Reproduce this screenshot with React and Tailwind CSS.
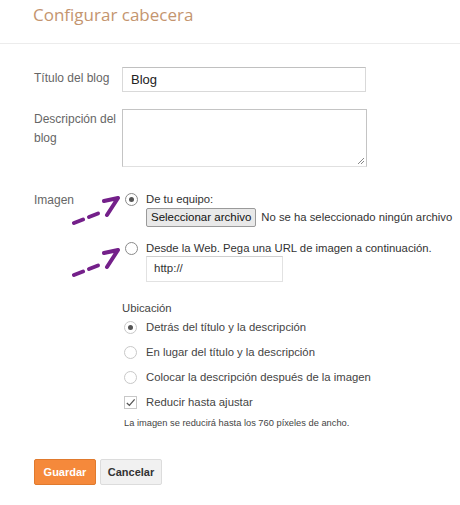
import React from 'react';

// Blogger style "Configurar cabecera" dialog

const sans = { fontFamily: '"Liberation Sans", Arial, sans-serif' };

function Radio({ checked, classic }) {
  return (
    <span
      className={`relative inline-flex h-[13px] w-[13px] shrink-0 items-center justify-center rounded-full border bg-white ${
        classic ? 'border-[#8a8a8a]' : 'border-[#c8c8c8]'
      }`}
    >
      {checked && <span className="h-[5px] w-[5px] rounded-full bg-[#555]" />}
    </span>
  );
}

function Checkbox() {
  return (
    <span className="inline-flex h-[13px] w-[13px] shrink-0 items-center justify-center border border-[#c8c8c8] bg-white">
      <svg viewBox="0 0 12 12" className="h-[11px] w-[11px]">
        <path d="M2 6.5 L4.8 9.2 L10.5 2.5" fill="none" stroke="#555" strokeWidth="1.4" />
      </svg>
    </span>
  );
}

function Arrow({ className }) {
  return (
    <svg viewBox="0 0 50 30" className={className}>
      <g fill="none" stroke="#74208a" strokeWidth="4" strokeLinecap="round" strokeLinejoin="round">
        <path d="M2 27 L11 23.5" />
        <path d="M17 21 L26 17.5" />
        <path d="M32 5 L46 2 L35 19" />
      </g>
    </svg>
  );
}

export default function App() {
  return (
    <div className="min-h-[505px] w-[460px] bg-white text-[11.3px] text-[#555]" style={sans}>
      <div className="h-[44px] border-b border-[#ececec] pl-[33px] pt-[3px]">
        <h1
          className="text-[17px] leading-[24px] text-[#c4956f]"
          style={{ fontFamily: '"Open Sans", sans-serif' }}
        >
          Configurar cabecera
        </h1>
      </div>

      <div className="pl-[34px]">
        {/* Título */}
        <div className="mt-[23px] flex">
          <div className="w-[88px] pt-[2px] text-[12px] leading-[19px] text-[#666]">Título del blog</div>
          <div className="flex h-[25px] w-[244px] items-center border border-[#d9d9d9] border-t-[#c0c0c0] px-[8px] text-[13px] text-[#222]">
            Blog
          </div>
        </div>

        {/* Descripción */}
        <div className="mt-[17px] flex">
          <div className="w-[88px] pt-[1px] text-[12px] leading-[19px] text-[#666]">
            Descripción del
            <br />
            blog
          </div>
          <div className="relative h-[58px] w-[245px] border border-[#c4c4c4] border-b-[#e0e0e0]">
            <svg viewBox="0 0 8 8" className="absolute bottom-[1px] right-[1px] h-[8px] w-[8px]">
              <path d="M1 7 L7 1 M4 7 L7 4" stroke="#888" strokeWidth="1" />
            </svg>
          </div>
        </div>

        {/* Imagen */}
        <div className="mt-[24px] flex">
          <div className="relative w-[88px] text-[12px] leading-[19px] text-[#666]">
            Imagen
            <Arrow className="absolute left-[38px] top-[5px] h-[30px] w-[50px]" />
            <Arrow className="absolute left-[38px] top-[57px] h-[30px] w-[50px]" />
          </div>
          <div className="text-[#333]">
            <div className="flex items-center gap-[8px] pl-[3px]">
              <Radio checked classic />
              <span className="leading-[16px]">De tu equipo:</span>
            </div>
            <div className="mt-[1px] flex items-center gap-[5px] pl-[24px]">
              <span className="flex h-[19px] items-center whitespace-nowrap rounded-[2px] border border-[#9a9a9a] bg-[#e9e9e9] px-[4px] text-[11.5px] text-[#111]">
                Seleccionar archivo
              </span>
              <span className="whitespace-nowrap">No se ha seleccionado ningún archivo</span>
            </div>
            <div className="mt-[13px] flex items-center gap-[8px] pl-[3px]">
              <Radio classic />
              <span className="whitespace-nowrap leading-[16px]">
                Desde la Web. Pega una URL de imagen a continuación.
              </span>
            </div>
            <div className="ml-[24px] flex h-[26px] w-[137px] items-center border border-[#e2e2e2] border-t-[#cfcfcf] px-[7px] text-[11.5px] text-[#333]">
              http://
            </div>
          </div>
        </div>

        {/* Ubicación */}
        <div className="ml-[88px] mt-[17px] text-[#444]">
          <div className="leading-[18px]">Ubicación</div>
          <div className="mt-[2px] flex flex-col gap-[9px] pl-[2px]">
            <div className="flex items-center gap-[9px]">
              <Radio checked />
              <span className="leading-[16px]">Detrás del título y la descripción</span>
            </div>
            <div className="flex items-center gap-[9px]">
              <Radio />
              <span className="leading-[16px]">En lugar del título y la descripción</span>
            </div>
            <div className="flex items-center gap-[9px]">
              <Radio />
              <span className="leading-[16px]">Colocar la descripción después de la imagen</span>
            </div>
            <div className="flex items-center gap-[9px]">
              <Checkbox />
              <span className="leading-[16px]">Reducir hasta ajustar</span>
            </div>
          </div>
          <div className="mt-[7px] pl-[2px] text-[9.3px] leading-[12px] text-[#444]">
            La imagen se reducirá hasta los 760 píxeles de ancho.
          </div>
        </div>

        {/* Botones */}
        <div className="mt-[30px] flex gap-[4px]">
          <button className="h-[26px] w-[62px] rounded-[2px] border border-[#e07a2e] bg-[#f5893b] text-[11px] font-bold text-white">
            Guardar
          </button>
          <button className="h-[26px] w-[62px] rounded-[2px] border border-[#dcdcdc] bg-[#f1f1f1] text-[11px] font-bold text-[#333]">
            Cancelar
          </button>
        </div>
      </div>
    </div>
  );
}
